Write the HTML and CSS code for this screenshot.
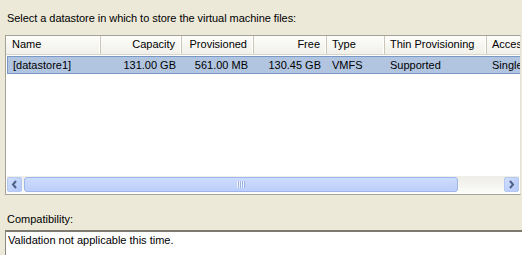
FILE: index.html
```html
<!DOCTYPE html>
<html lang="en">

<head>
  <meta charset="UTF-8" />
  <title>Select Datastore</title>
  <link rel="stylesheet" href="styles.css">
</head>

<body>
  <div class="prompt">Select a datastore in which to store the virtual machine files:</div>

  <div class="list">
    <div class="grid">
      <div class="row head">
        <span class="c c-name">Name</span>
        <span class="c c-cap num">Capacity</span>
        <span class="c c-prov num">Provisioned</span>
        <span class="c c-free num">Free</span>
        <span class="c c-type">Type</span>
        <span class="c c-thin">Thin Provisioning</span>
        <span class="c c-acc">Access</span>
      </div>
      <div class="row sel">
        <span class="c c-name">[datastore1]</span>
        <span class="c c-cap num">131.00 GB</span>
        <span class="c c-prov num">561.00 MB</span>
        <span class="c c-free num">130.45 GB</span>
        <span class="c c-type">VMFS</span>
        <span class="c c-thin">Supported</span>
        <span class="c c-acc">Single host</span>
      </div>
    </div>

    <div class="hscroll">
      <span class="sbtn">
        <svg width="15" height="15" viewBox="0 0 15 15"><polyline points="9,4 6,7.5 9,11" fill="none" stroke="#4d6185" stroke-width="2" /></svg>
      </span>
      <span class="thumb"><span class="grip"></span></span>
      <span class="track"></span>
      <span class="sbtn">
        <svg width="15" height="15" viewBox="0 0 15 15"><polyline points="6,4 9,7.5 6,11" fill="none" stroke="#4d6185" stroke-width="2" /></svg>
      </span>
    </div>
  </div>

  <div class="label">Compatibility:</div>
  <div class="textbox">Validation not applicable this time.</div>
</body>

</html>
```

FILE: styles.css
```css
body {
  margin: 0;
  background-color: #ece9d8;
  font-family: 'Liberation Sans', Arial, sans-serif;
  font-size: 11px;
  line-height: 13px;
  color: #000;
  overflow: hidden;
}

.prompt {
  padding: 12px 0 0 7px;
  letter-spacing: -0.05px;
}

.list {
  margin: 10px 0 0 5px;
  width: 514px;
  height: 158px;
  border: 1px solid #a5a297;
  border-right-color: #e4e2d8;
  background-color: #fff;
  display: flex;
  flex-direction: column;
  overflow: hidden;
}

.grid {
  flex: 1;
  padding-left: 1px;
}

.row {
  display: flex;
  white-space: nowrap;
}

.c {
  flex: none;
  overflow: hidden;
  box-sizing: border-box;
  padding: 0 6px 0 5px;
}

.num {
  text-align: right;
}

.c-name { width: 94px; }
.c-cap { width: 81px; }
.c-prov { width: 72px; }
.c-free { width: 73px; }
.c-type { width: 58px; }
.c-thin { width: 102px; }
.c-acc { width: 60px; }

.head {
  height: 18px;
  background: linear-gradient(#fdfdfb, #f1f0e9);
  border-bottom: 1px solid #d8d5c8;
  margin-left: -1px;
  padding-left: 1px;
}

.head .c {
  line-height: 17px;
  border-right: 1px solid #cbc8b9;
  box-shadow: inset -1px 0 #fff;
}

.head .c-acc {
  border-right: none;
  box-shadow: none;
}

.sel {
  margin-top: 1px;
  height: 16px;
  line-height: 16px;
  background-color: #b1c5e0;
  border: 1px solid #7a98c6;
  border-right: none;
}

.sel .c-name {
  width: 93px;
}

.hscroll {
  height: 17px;
  margin: 0 1px 1px 1px;
  display: flex;
  align-items: center;
  background: linear-gradient(#eeede6, #fbfbf8);
}

.sbtn {
  flex: none;
  width: 15px;
  height: 15px;
  box-sizing: border-box;
  border: 1px solid #b4c8f4;
  border-radius: 2px;
  background: linear-gradient(135deg, #d0defd, #b4c8f8);
}

.sbtn svg {
  display: block;
  margin: -1px;
}

.thumb {
  flex: none;
  width: 434px;
  height: 15px;
  margin-left: 2px;
  box-sizing: border-box;
  border: 1px solid #9fb6ec;
  border-radius: 3px;
  background: linear-gradient(#cddbfd, #bccefa);
  display: flex;
  align-items: center;
  justify-content: center;
}

.grip {
  width: 8px;
  height: 7px;
  background: repeating-linear-gradient(90deg, #eef3fe 0 1px, #9db3e6 1px 2px);
}

.track {
  flex: 1;
}

.label {
  padding: 18px 0 0 7px;
}

.textbox {
  margin: 4px 0 0 5px;
  width: 514px;
  height: 21px;
  padding: 2px 0 0 2px;
  border-top: 2px solid #7d7a71;
  border-left: 1px solid #8a877e;
  border-right: 1px solid #e4e2d8;
  background-color: #fff;
}
```
